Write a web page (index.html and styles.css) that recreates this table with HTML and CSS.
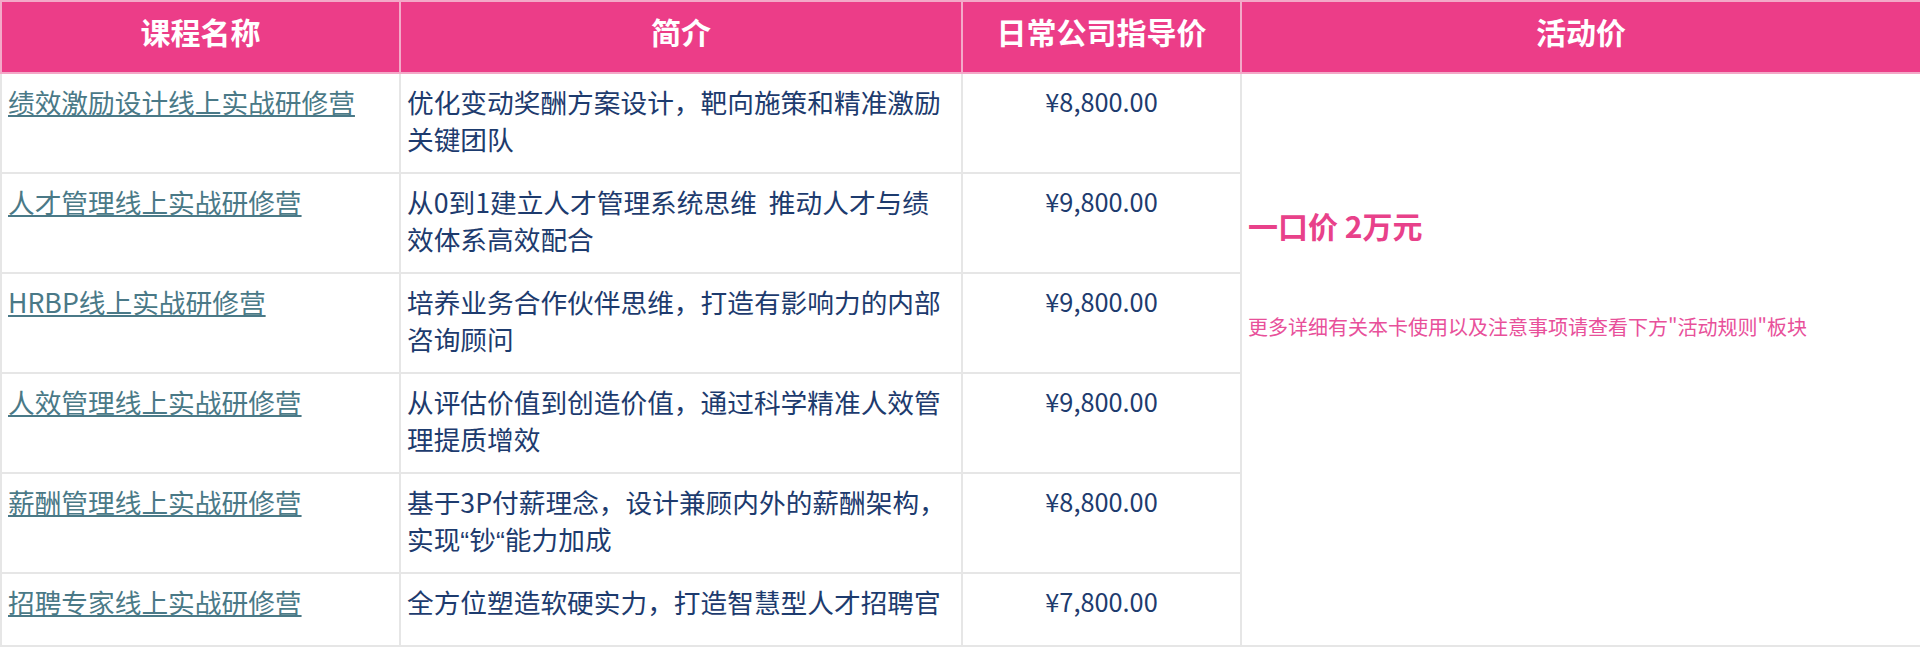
FILE: index.html
```html
<!DOCTYPE html>
<html lang="zh-CN">
<head>
    <meta charset="UTF-8">
    <meta name="viewport" content="width=device-width, initial-scale=1.0">
    <title>课程价格表</title>
    <link rel="stylesheet" href="styles.css">
</head>
<body>

    <table class="price-table">
        <colgroup>
            <col class="col-name">
            <col class="col-desc">
            <col class="col-price">
            <col class="col-promo">
        </colgroup>
        <thead>
            <tr>
                <th>课程名称</th>
                <th>简介</th>
                <th>日常公司指导价</th>
                <th>活动价</th>
            </tr>
        </thead>
        <tbody>
            <tr>
                <td><a href="#">绩效激励设计线上实战研修营</a></td>
                <td class="desc">优化变动奖酬方案设计，靶向施策和精准激励关键团队</td>
                <td class="price">¥8,800.00</td>
                <td class="promo" rowspan="6">
                    <p class="promo-main">一口价 2万元</p>
                    <p class="promo-note">更多详细有关本卡使用以及注意事项请查看下方"活动规则"板块</p>
                </td>
            </tr>
            <tr>
                <td><a href="#">人才管理线上实战研修营</a></td>
                <td class="desc">从0到1建立人才管理系统思维&nbsp; 推动人才与绩效体系高效配合</td>
                <td class="price">¥9,800.00</td>
            </tr>
            <tr>
                <td><a href="#">HRBP线上实战研修营</a></td>
                <td class="desc">培养业务合作伙伴思维，打造有影响力的内部咨询顾问</td>
                <td class="price">¥9,800.00</td>
            </tr>
            <tr>
                <td><a href="#">人效管理线上实战研修营</a></td>
                <td class="desc">从评估价值到创造价值，通过科学精准人效管理提质增效</td>
                <td class="price">¥9,800.00</td>
            </tr>
            <tr>
                <td><a href="#">薪酬管理线上实战研修营</a></td>
                <td class="desc">基于3P付薪理念，设计兼顾内外的薪酬架构，<span class="latin">实现“钞“能力加成</span></td>
                <td class="price">¥8,800.00</td>
            </tr>
            <tr>
                <td><a href="#">招聘专家线上实战研修营</a></td>
                <td class="desc">全方位塑造软硬实力，打造智慧型人才招聘官</td>
                <td class="price">¥7,800.00</td>
            </tr>
        </tbody>
    </table>

</body>
</html>
```

FILE: styles.css
```css
* {
    margin: 0;
    padding: 0;
    box-sizing: border-box;
}

body {
    font-family: "Noto Sans CJK SC", "Noto Sans", sans-serif;
    background-color: white;
}

.price-table {
    width: 1920px;
    border-collapse: collapse;
    table-layout: fixed;
}

.col-name {
    width: 399px;
}

.col-desc {
    width: 562px;
}

.col-price {
    width: 279px;
}

.col-promo {
    width: 680px;
}

th {
    height: 72px;
    padding-bottom: 12px;
    background-color: #ec3d88;
    color: white;
    font-size: 30px;
    font-weight: bold;
    text-align: center;
    border: 2px solid #f3a9c8;
}

td {
    height: 73px;
    padding: 9px 6px 15px 6px;
    font-size: 26.7px;
    line-height: 37px;
    vertical-align: top;
    border: 2px solid #e6e6e6;
}

td a {
    color: #4a7987;
}

.desc {
    color: #1d3b6e;
    padding-right: 8px;
}

/* narrow curly quotes, as in the Latin fonts */
.latin {
    font-family: "Liberation Sans", "Noto Sans CJK SC", sans-serif;
    line-height: 1;
}

.price {
    color: #1d3b6e;
    font-size: 25.3px;
    text-align: center;
}

.promo {
    vertical-align: top;
    padding-top: 131px;
}

.promo-main {
    color: #e8418a;
    font-size: 30px;
    font-weight: bold;
    line-height: 40px;
}

.promo-note {
    margin-top: 68px;
    color: #e8509a;
    font-size: 20px;
    line-height: 28px;
}
```
